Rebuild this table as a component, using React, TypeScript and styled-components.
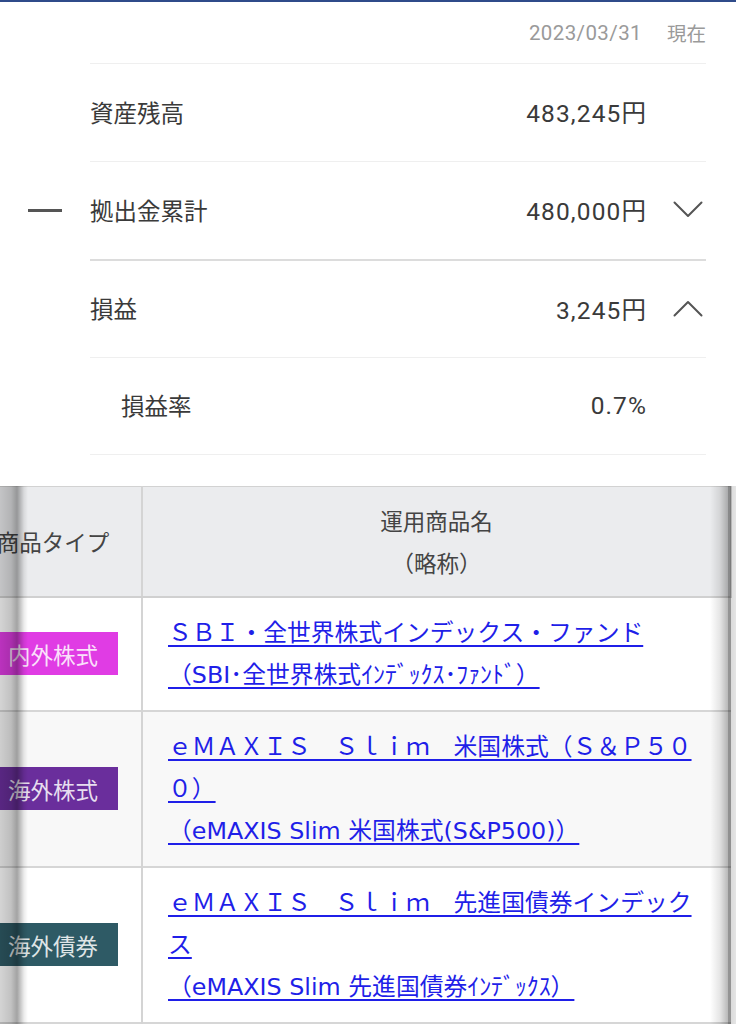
import React, { useLayoutEffect, useRef } from "react";
import styled, { createGlobalStyle } from "styled-components";

const Global = createGlobalStyle`
  html, body { margin: 0; padding: 0; background: #fff; }
  body {
    font-family: "Noto Sans CJK JP", "Noto Sans", sans-serif;
    -webkit-font-smoothing: antialiased;
  }
`;

const Page = styled.div`
  width: 736px;
  border-top: 2px solid #2f4b8a;
`;

const DateLine = styled.div`
  height: 61px;
  display: flex;
  align-items: center;
  justify-content: flex-end;
  gap: 25px;
  padding-right: 30px;
  color: #9a9a9a;
`;

const DateText = styled.span`
  font-family: Roboto, sans-serif;
  font-size: 20.5px;
  letter-spacing: 0.4px;
`;

const AsOf = styled.span`
  font-family: "Noto Sans CJK JP", sans-serif;
  font-size: 19.5px;
`;

const SummaryList = styled.div`
  padding-right: 30px;
`;

const Row = styled.div`
  display: flex;
`;

const Operator = styled.div`
  width: 90px;
  display: flex;
  align-items: center;
  justify-content: center;
`;

const Minus = styled.span`
  width: 34px;
  height: 3px;
  background: #555;
`;

const RowBody = styled.div<{ $strong?: boolean; $last?: boolean }>`
  flex: 1;
  box-sizing: border-box;
  height: 98px;
  padding-bottom: 2px;
  display: flex;
  align-items: center;
  border-top: ${(p) => (p.$strong ? "2px solid #dcdcdc" : "1px solid #efefef")};
  border-bottom: ${(p) => (p.$last ? "1px solid #efefef" : "none")};
  color: #3a3a3a;
`;

const Label = styled.span<{ $indent?: boolean }>`
  padding-left: ${(p) => (p.$indent ? "31px" : "0")};
  font-family: "Noto Sans CJK JP", sans-serif;
  font-size: 23.5px;
`;

const Value = styled.span`
  margin-left: auto;
  margin-right: -1px;
  font-family: Roboto, "Noto Sans CJK JP", sans-serif;
  font-size: 24.5px;
  letter-spacing: 1.1px;
`;

const ChevronCell = styled.span`
  width: 60px;
  display: flex;
  justify-content: flex-end;
  padding-right: 3px;
  box-sizing: border-box;
`;

const Chevron = ({ up }: { up?: boolean }) => (
  <svg width="30" height="17" viewBox="0 0 30 17" fill="none">
    <polyline
      points={up ? "1.5,15.5 15,2 28.5,15.5" : "1.5,1.5 15,15 28.5,1.5"}
      stroke="#555"
      strokeWidth="2"
      strokeLinecap="round"
      strokeLinejoin="round"
    />
  </svg>
);

const TableFrame = styled.div`
  position: relative;
  margin-top: 31px;
`;

const Scroller = styled.div`
  overflow-x: auto;
  scrollbar-width: none;
  &::-webkit-scrollbar {
    display: none;
  }
`;

const Table = styled.table`
  width: 766px;
  min-width: 766px;
  table-layout: fixed;
  border-collapse: collapse;
  margin-right: 5px;
  border-top: 1px solid #d2d2d2;
  font-family: "Noto Sans CJK JP", sans-serif;
`;

const HeadCell = styled.th`
  box-sizing: border-box;
  height: 110px;
  padding: 0;
  background: #ebecee;
  border-bottom: 2px solid #d0d0d0;
  border-right: 2px solid #d4d4d4;
  font-weight: normal;
  font-size: 22.5px;
  line-height: 42px;
  color: #444;
  text-align: center;
  vertical-align: middle;
  white-space: nowrap;
`;

const BodyRow = styled.tr<{ $alt?: boolean }>`
  background: ${(p) => (p.$alt ? "#f8f8f8" : "#fff")};
  border-bottom: 2px solid #d6d6d6;
`;

const TypeCell = styled.td`
  padding: 0;
  text-align: center;
  vertical-align: middle;
  border-right: 2px solid #d4d4d4;
`;

const NameCell = styled.td`
  padding: 14px 24px 14px 25px;
  vertical-align: top;
`;

const Badge = styled.span<{ $bg: string }>`
  display: inline-flex;
  align-items: center;
  height: 43px;
  padding: 0 20px;
  background: ${(p) => p.$bg};
  color: rgba(255, 255, 255, 0.86);
  font-size: 22.5px;
  white-space: nowrap;
`;

const FundLink = styled.a`
  display: block;
  width: 540px;
  font-family: "DejaVu Sans", "Noto Sans CJK JP", sans-serif;
  font-size: 23.8px;
  line-height: 42px;
  color: #1f1fe8;
  text-decoration: underline;
  text-underline-offset: 4px;
  text-decoration-thickness: 1.5px;
`;

const LeftShade = styled.div`
  position: absolute;
  left: 0;
  top: 0;
  bottom: 0;
  width: 28px;
  pointer-events: none;
  background: linear-gradient(
    to right,
    rgba(0, 0, 0, 0.17) 0,
    rgba(0, 0, 0, 0.24) 11px,
    rgba(0, 0, 0, 0.36) 17px,
    rgba(0, 0, 0, 0.08) 24px,
    rgba(0, 0, 0, 0) 28px
  );
`;

const RightShade = styled.div`
  position: absolute;
  right: 0;
  top: 0;
  bottom: 0;
  width: 26px;
  pointer-events: none;
  background: linear-gradient(
    to right,
    rgba(0, 0, 0, 0) 0,
    rgba(0, 0, 0, 0.1) 10px,
    rgba(0, 0, 0, 0.28) 18px,
    rgba(0, 0, 0, 0.42) 18px,
    rgba(0, 0, 0, 0.42) 21px,
    rgba(0, 0, 0, 0.14) 21px,
    rgba(0, 0, 0, 0.1) 26px
  );
`;

type Fund = { type: string; color: string; name: string; short: string };

const funds: Fund[] = [
  {
    type: "内外株式",
    color: "#e03ce4",
    name: "ＳＢＩ・全世界株式インデックス・ファンド",
    short: "（SBI･全世界株式ｲﾝﾃﾞｯｸｽ･ﾌｧﾝﾄﾞ）",
  },
  {
    type: "海外株式",
    color: "#6a2e9c",
    name: "ｅＭＡＸＩＳ　Ｓｌｉｍ　米国株式（Ｓ＆Ｐ５００）",
    short: "（eMAXIS Slim 米国株式(S&P500)）",
  },
  {
    type: "海外債券",
    color: "#2e5a65",
    name: "ｅＭＡＸＩＳ　Ｓｌｉｍ　先進国債券インデックス",
    short: "（eMAXIS Slim 先進国債券ｲﾝﾃﾞｯｸｽ）",
  },
];

export default function App() {
  const scrollRef = useRef<HTMLDivElement>(null);
  useLayoutEffect(() => {
    if (scrollRef.current) scrollRef.current.scrollLeft = 35;
  }, []);

  return (
    <Page>
      <Global />
      <DateLine>
        <DateText>2023/03/31</DateText>
        <AsOf>現在</AsOf>
      </DateLine>
      <SummaryList>
        <Row>
          <Operator />
          <RowBody>
            <Label>資産残高</Label>
            <Value>483,245円</Value>
            <ChevronCell />
          </RowBody>
        </Row>
        <Row>
          <Operator>
            <Minus />
          </Operator>
          <RowBody>
            <Label>拠出金累計</Label>
            <Value>480,000円</Value>
            <ChevronCell>
              <Chevron />
            </ChevronCell>
          </RowBody>
        </Row>
        <Row>
          <Operator />
          <RowBody $strong>
            <Label>損益</Label>
            <Value>3,245円</Value>
            <ChevronCell>
              <Chevron up />
            </ChevronCell>
          </RowBody>
        </Row>
        <Row>
          <Operator />
          <RowBody $last>
            <Label $indent>損益率</Label>
            <Value>0.7%</Value>
            <ChevronCell />
          </RowBody>
        </Row>
      </SummaryList>
      <TableFrame>
        <Scroller ref={scrollRef}>
          <Table>
            <colgroup>
              <col style={{ width: 177 }} />
              <col style={{ width: 589 }} />
            </colgroup>
            <thead>
              <tr>
                <HeadCell>商品タイプ</HeadCell>
                <HeadCell>
                  運用商品名
                  <br />
                  （略称）
                </HeadCell>
              </tr>
            </thead>
            <tbody>
              {funds.map((f, i) => (
                <BodyRow key={f.type} $alt={i % 2 === 1}>
                  <TypeCell>
                    <Badge $bg={f.color}>{f.type}</Badge>
                  </TypeCell>
                  <NameCell>
                    <FundLink href="#">
                      {f.name}
                      <br />
                      {f.short}
                    </FundLink>
                  </NameCell>
                </BodyRow>
              ))}
            </tbody>
          </Table>
        </Scroller>
        <LeftShade />
        <RightShade />
      </TableFrame>
    </Page>
  );
}
